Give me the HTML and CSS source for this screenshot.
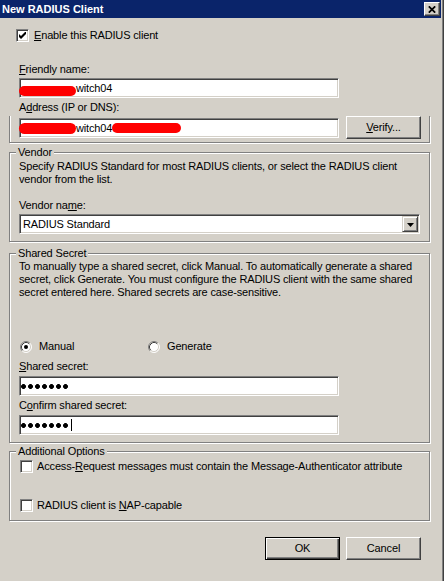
FILE: index.html
```html
<!DOCTYPE html>
<html>
<head>
<meta charset="utf-8">
<title>New RADIUS Client</title>
<link rel="stylesheet" href="styles.css">
</head>
<body>
<div class="win">
  <div class="titlebar">
    <span class="title">New RADIUS Client</span>
    <span class="close"><svg width="8" height="7" viewBox="0 0 8 7"><path d="M0.8 0.3 L7.2 6.7 M7.2 0.3 L0.8 6.7" stroke="#000" stroke-width="1.7" fill="none"/></svg></span>
  </div>

  <div class="chk-row enable">
    <span class="chk"><svg width="11" height="11" viewBox="0 0 11 11"><polygon points="2,4 4,6 8,2 9,2 9,4 4,9 2,7" fill="#000"/></svg></span>
    <span><u>E</u>nable this RADIUS client</span>
  </div>

  <div class="lbl friendly-lbl"><u>F</u>riendly name:</div>
  <div class="edit outer"><span class="redact p1"></span>witch04</div>

  <div class="lbl addr-lbl">A<u>d</u>dress (IP or DNS):</div>
  <div class="group open">
    <div class="addr-row">
      <div class="edit"><span class="redact p2"></span>witch04<span class="redact p3"></span></div>
      <div class="btn verify"><span><u>V</u>erify...</span></div>
    </div>
  </div>

  <div class="group vendor">
    <span class="legend">Vendor</span>
    <p class="desc">Specify RADIUS Standard for most RADIUS clients, or select the RADIUS client<br>vendor from the list.</p>
    <div class="lbl vname-lbl">Vendor na<u>m</u>e:</div>
    <div class="combo">
      <span class="combo-text">RADIUS Standard</span>
      <span class="drop"><svg width="7" height="4" viewBox="0 0 7 4"><polygon points="0,0 7,0 3.5,4" fill="#000"/></svg></span>
    </div>
  </div>

  <div class="group secret">
    <span class="legend">Shared Secret</span>
    <p class="desc">To manually type a shared secret, click Manual. To automatically generate a shared<br>secret, click Generate. You must configure the RADIUS client with the same shared<br>secret entered here. Shared secrets are case-sensitive.</p>
    <div class="radios">
      <div class="radio-item">
        <svg class="radio" width="12" height="12" viewBox="0 0 12 12">
          <circle cx="6" cy="6" r="5" fill="#fff"/>
          <path d="M2.11 9.89 A5.5 5.5 0 0 1 9.89 2.11" stroke="#808080" fill="none"/>
          <path d="M9.89 2.11 A5.5 5.5 0 0 1 2.11 9.89" stroke="#fff" fill="none"/>
          <path d="M2.82 9.18 A4.5 4.5 0 0 1 9.18 2.82" stroke="#404040" fill="none"/>
          <path d="M9.18 2.82 A4.5 4.5 0 0 1 2.82 9.18" stroke="#d4d0c8" fill="none"/>
          <circle cx="6" cy="6" r="2" fill="#000"/>
        </svg>
        <span>Manual</span>
      </div>
      <div class="radio-item">
        <svg class="radio" width="12" height="12" viewBox="0 0 12 12">
          <circle cx="6" cy="6" r="5" fill="#fff"/>
          <path d="M2.11 9.89 A5.5 5.5 0 0 1 9.89 2.11" stroke="#808080" fill="none"/>
          <path d="M9.89 2.11 A5.5 5.5 0 0 1 2.11 9.89" stroke="#fff" fill="none"/>
          <path d="M2.82 9.18 A4.5 4.5 0 0 1 9.18 2.82" stroke="#404040" fill="none"/>
          <path d="M9.18 2.82 A4.5 4.5 0 0 1 2.82 9.18" stroke="#d4d0c8" fill="none"/>
        </svg>
        <span>Generate</span>
      </div>
    </div>
    <div class="lbl ss-lbl"><u>S</u>hared secret:</div>
    <div class="edit pw"><span class="dots"></span></div>
    <div class="lbl cs-lbl">C<u>o</u>nfirm shared secret:</div>
    <div class="edit pw"><span class="dots"></span><span class="caret"></span></div>
  </div>

  <div class="group options">
    <span class="legend">Additional Options</span>
    <div class="chk-row opt">
      <span class="chk"></span>
      <span>Access-<u>R</u>equest messages must contain the Message-Authenticator attribute</span>
    </div>
    <div class="chk-row opt opt2">
      <span class="chk"></span>
      <span>RADIUS client is <u>N</u>AP-capable</span>
    </div>
  </div>

  <div class="buttons">
    <div class="btn default"><span>OK</span></div>
    <div class="btn"><span>Cancel</span></div>
  </div>
</div>
</body>
</html>
```

FILE: styles.css
```css
html, body {
  margin: 0;
  padding: 0;
  background: #d4d0c8;
}

body {
  font-family: "Liberation Sans", Arial, sans-serif;
  font-size: 11px;
  line-height: 13px;
  letter-spacing: -0.15px;
  color: #000;
  overflow: hidden;
}

u {
  text-decoration: underline;
  text-underline-offset: 1px;
}

.win {
  width: 444px;
  height: 581px;
  box-sizing: border-box;
  background: #d4d0c8;
  box-shadow: inset -1px 0 0 #404040, inset -2px 0 0 #808080;
  overflow: hidden;
}

/* Title bar */
.titlebar {
  width: 441px;
  height: 18px;
  background: #0a246a;
  display: flex;
  align-items: center;
  justify-content: space-between;
  padding-left: 2px;
  box-sizing: border-box;
}

.title {
  color: #fff;
  font-weight: bold;
  letter-spacing: 0;
  font-size: 11px;
}

.close {
  width: 16px;
  height: 14px;
  box-sizing: border-box;
  margin-right: 1px;
  background: #d4d0c8;
  border: 1px solid;
  border-color: #fff #404040 #404040 #fff;
  box-shadow: inset -1px -1px 0 #808080;
  display: flex;
  align-items: center;
  justify-content: center;
}

/* Checkboxes */
.chk-row {
  display: flex;
  align-items: center;
  height: 13px;
}

.chk {
  flex: none;
  width: 13px;
  height: 13px;
  box-sizing: border-box;
  background: #fff;
  border: 1px solid;
  border-color: #808080 #fff #fff #808080;
  box-shadow: inset 1px 1px 0 #404040, inset -1px -1px 0 #d4d0c8;
  display: block;
}

.chk svg {
  display: block;
}

.enable {
  margin-top: 11px;
  padding-left: 16px;
  gap: 5px;
}

/* Labels & edits */
.lbl {
  height: 13px;
}

.friendly-lbl {
  margin-top: 21px;
  margin-left: 19px;
}

.addr-lbl {
  margin-top: 3px;
  margin-left: 19px;
}

.edit {
  width: 320px;
  height: 20px;
  box-sizing: border-box;
  background: #fff;
  border: 1px solid;
  border-color: #808080 #fff #fff #808080;
  box-shadow: inset 1px 1px 0 #404040, inset -1px -1px 0 #d4d0c8;
  display: flex;
  align-items: center;
  flex: none;
}

.edit.outer {
  margin-top: 2px;
  margin-left: 19px;
}

.redact {
  display: inline-block;
  background: #ff0000;
  border-radius: 6px;
  flex: none;
}

.p1 {
  width: 57px;
  height: 10px;
  margin-left: -1px;
  margin-top: 5px;
}

.p2 {
  width: 57px;
  height: 11px;
  margin-left: -1px;
  margin-top: 1px;
}

.p3 {
  width: 69px;
  height: 10px;
  margin-top: 0;
  margin-left: 0;
}

/* Group boxes */
.group {
  position: relative;
  margin-left: 9px;
  width: 421px;
  box-sizing: border-box;
  border: 1px solid #808080;
  box-shadow: 1px 1px 0 #fff, inset 1px 1px 0 #fff;
  padding: 0 9px;
}

.legend {
  position: absolute;
  top: -7px;
  left: 6px;
  padding: 0 2px;
  background: #d4d0c8;
  height: 13px;
  white-space: nowrap;
}

.group.open {
  border-top: none;
  box-shadow: 1px 1px 0 #fff, inset 1px 0 0 #fff;
  margin-top: 2px;
  padding-bottom: 3px;
}

.addr-row {
  display: flex;
  align-items: flex-start;
}

.addr-row .edit {
  margin-top: 2px;
}

.desc {
  margin: 0;
  white-space: nowrap;
}

.vendor {
  margin-top: 9px;
  padding-top: 7px;
  padding-bottom: 7px;
}

.vname-lbl {
  margin-top: 13px;
}

.combo {
  margin-top: 2px;
  width: 401px;
  height: 20px;
  box-sizing: border-box;
  background: #fff;
  border: 1px solid;
  border-color: #808080 #fff #fff #808080;
  box-shadow: inset 1px 1px 0 #404040, inset -1px -1px 0 #d4d0c8;
  display: flex;
  align-items: center;
  padding-left: 3px;
}

.combo-text {
  flex: 1;
}

.drop {
  width: 16px;
  height: 16px;
  box-sizing: border-box;
  margin-right: 1px;
  background: #d4d0c8;
  border: 1px solid;
  border-color: #d4d0c8 #404040 #404040 #d4d0c8;
  box-shadow: inset 1px 1px 0 #fff, inset -1px -1px 0 #808080;
  display: flex;
  align-items: center;
  justify-content: center;
}

.drop svg {
  display: block;
  margin-top: 1px;
}

.secret {
  margin-top: 11px;
  padding-top: 6px;
  padding-bottom: 7px;
}

.radios {
  margin-top: 41px;
  display: grid;
  grid-template-columns: 128px auto;
  margin-left: 1px;
  height: 13px;
}

.radio-item {
  display: flex;
  align-items: center;
  gap: 7px;
}

.radio {
  display: block;
  flex: none;
}

.ss-lbl {
  margin-top: 7px;
}

.cs-lbl {
  margin-top: 3px;
}

.edit.pw {
  margin-top: 3px;
}

.dots {
  display: block;
  width: 49px;
  height: 5px;
  margin-left: 1px;
  background: radial-gradient(circle at 2.5px 2.5px, #000 2.1px, rgba(0, 0, 0, 0) 2.7px) 0 0 / 7px 5px repeat-x;
}

.caret {
  display: block;
  width: 1px;
  height: 12px;
  background: #000;
  margin-left: 1px;
}

.options {
  margin-top: 8px;
  padding-top: 8px;
  padding-bottom: 8px;
}

.opt {
  padding-left: 1px;
  gap: 4px;
}

.opt2 {
  margin-top: 26px;
}

/* Buttons */
.btn {
  width: 75px;
  height: 23px;
  box-sizing: border-box;
  background: #d4d0c8;
  border: 1px solid;
  border-color: #fff #404040 #404040 #fff;
  box-shadow: inset -1px -1px 0 #808080;
  display: flex;
  align-items: center;
  justify-content: center;
  flex: none;
}

.btn.default {
  border-color: #000;
  box-shadow: inset 1px 1px 0 #fff, inset -1px -1px 0 #404040, inset -2px -2px 0 #808080;
}

.verify {
  margin-left: 7px;
}

.buttons {
  margin-top: 16px;
  display: flex;
  justify-content: flex-end;
  gap: 6px;
  padding-right: 23px;
}
```
